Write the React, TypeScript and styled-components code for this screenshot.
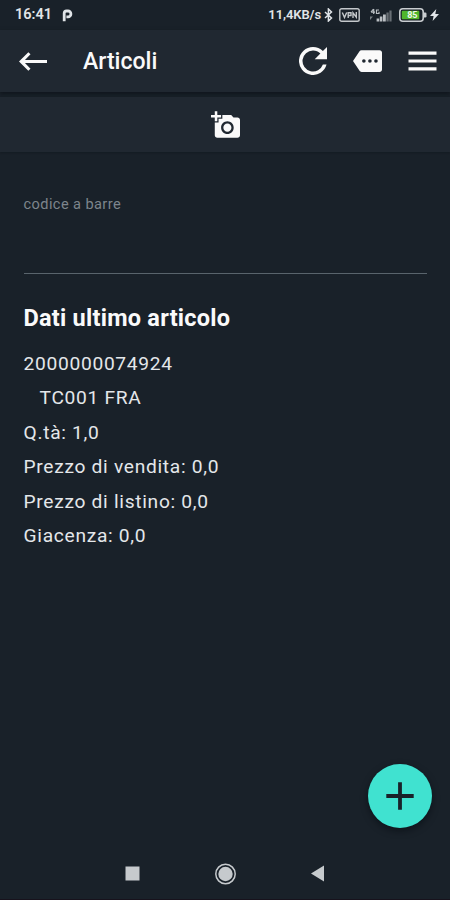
import React from "react";
import styled, { createGlobalStyle } from "styled-components";

const Global = createGlobalStyle`
  *, *::before, *::after { box-sizing: border-box; }
  body { margin: 0; background: #192129; font-family: Roboto, sans-serif; }
`;

const Screen = styled.main`
  width: 450px;
  height: 900px;
  display: flex;
  flex-direction: column;
  background: #192129;
  color: #e4e7ea;
  overflow: hidden;
  border-bottom: 1px solid #17121c;
`;

const StatusBar = styled.header`
  height: 30px;
  flex: none;
  display: flex;
  align-items: center;
  justify-content: space-between;
  padding: 0 11px 0 15px;
`;

const StatusGroup = styled.div`
  display: flex;
  align-items: center;
`;

const StatusText = styled.span<{ $size: number; $weight: number; $spacing?: number }>`
  font-size: ${(p) => p.$size}px;
  font-weight: ${(p) => p.$weight};
  line-height: 16px;
  letter-spacing: ${(p) => p.$spacing ?? 0}px;
  color: #e1e5e8;
`;

const Glyph = styled.svg<{ $left?: number }>`
  display: block;
  flex: none;
  margin-left: ${(p) => p.$left ?? 0}px;
`;

const AppBar = styled.nav`
  height: 62px;
  flex: none;
  display: flex;
  align-items: center;
  padding: 0 13px 0 19px;
  background: #202831;
  color: #fafafa;
  box-shadow: 0 2px 4px rgba(5, 10, 16, 0.5);
`;

const Title = styled.h1`
  flex: 1;
  margin: 2px 0 0 36px;
  font-size: 23px;
  font-weight: 500;
  line-height: 30px;
`;

const IconButton = styled.button`
  display: flex;
  padding: 0;
  border: 0;
  background: none;
  color: inherit;
`;

const Actions = styled.div`
  display: flex;
  align-items: center;
  gap: 26px;
  margin-top: -1px;
`;

const CameraBar = styled.div`
  height: 55px;
  flex: none;
  margin-top: 5px;
  display: flex;
  align-items: center;
  justify-content: center;
  background: #202831;
  color: #fafafa;
  box-shadow: 0 1px 2px rgba(5, 10, 16, 0.25);
`;

const Content = styled.section`
  flex: 1;
  padding: 42px 23px 0 23.5px;
`;

const Field = styled.div`
  height: 80px;
  border-bottom: 1px solid #59646c;
`;

const Label = styled.label`
  display: block;
  font-size: 14.6px;
  line-height: 20px;
  letter-spacing: 0.4px;
  color: #7d858c;
`;

const Heading = styled.h2`
  margin: 29px 0 14px;
  font-size: 23.5px;
  font-weight: 700;
  line-height: 30px;
  letter-spacing: 0.25px;
  color: #fafafa;
`;

const Line = styled.p<{ $indent?: boolean }>`
  margin: 0;
  padding-left: ${(p) => (p.$indent ? 16 : 0)}px;
  font-size: 19.2px;
  line-height: 34.4px;
  letter-spacing: 0.7px;
`;

const FabRow = styled.div`
  display: flex;
  justify-content: flex-end;
  padding-right: 18px;
  height: 64px;
  flex: none;
`;

const Fab = styled.button`
  width: 64px;
  height: 64px;
  padding: 0;
  border: 0;
  border-radius: 50%;
  display: flex;
  align-items: center;
  justify-content: center;
  background: #40e2d0;
  color: #192129;
  box-shadow: 0 3px 7px rgba(3, 8, 14, 0.5);
`;

const SystemNav = styled.footer`
  height: 71px;
  flex: none;
  display: grid;
  grid-template-columns: repeat(3, 93px);
  justify-content: center;
  justify-items: center;
  align-items: center;
  padding-top: 20px;
`;

export default function App() {
  return (
    <>
      <Global />
      <Screen>
        <StatusBar>
          <StatusGroup>
            <StatusText $size={14.5} $weight={600}>16:41</StatusText>
            <Glyph $left={10} width="11" height="13" viewBox="0 0 11 13" fill="none" stroke="#e1e5e8" strokeWidth="2.8">
              <path d="M2.2 12.2V4.2Q2.2 2 4.4 2H6a2.9 2.9 0 0 1 0 5.8H4.4" />
            </Glyph>
          </StatusGroup>
          <StatusGroup>
            <StatusText $size={13} $weight={600} $spacing={-0.1}>11,4KB/s</StatusText>
            <Glyph $left={3} width="9" height="14" viewBox="0 0 9 14" fill="none" stroke="#e1e5e8" strokeWidth="1.5">
              <path d="M1 4l6.5 6L4.4 13V1l3.1 3L1 10" />
            </Glyph>
            <Glyph $left={6} width="21" height="14" viewBox="0 0 21 14" fill="none" stroke="#c4c8cb">
              <rect x="0.8" y="0.8" width="19.4" height="12.4" rx="1.8" strokeWidth="1.4" />
              <path d="M3.3 4.5l2.2 5 2.2-5M9.2 10V4.8h2.8v2.7H9.2M14 10V4.8l3.3 4.4V4" strokeWidth="1.4" />
            </Glyph>
            <Glyph $left={9} width="24" height="15" viewBox="0 0 24 15" fill="#b9bec2">
              <path d="M4.7 1v5M2 4.2h4M4.5 1L2 4.2M10 2H7.5v3.5H10V3.8" fill="none" stroke="#b9bec2" strokeWidth="1.2" />
              <path d="M1 8.5h3L1 12z" opacity="0.6" />
              <path d="M7.6 10.5h2.6v3H7.6zM10.8 8.5h2.6v5h-2.6zM14 6.5h2.8v7H14z" />
              <path d="M17.4 4.5h2.3v9h-2.3zM20.4 2.5h2.2v11h-2.2z" opacity="0.5" />
            </Glyph>
            <Glyph $left={6} width="28" height="14" viewBox="0 0 28 14">
              <rect x="0.8" y="0.8" width="23.4" height="12.4" rx="3" fill="none" stroke="#c9cdd0" strokeWidth="1.6" />
              <path d="M25 4.5h1.2q1.3 0 1.3 1.3v2.4q0 1.3-1.3 1.3H25z" fill="#c9cdd0" />
              <rect x="2.8" y="2.8" width="17.5" height="8.4" rx="1" fill="#4fb62b" />
              <text x="8.2" y="10.3" fontFamily="Roboto, sans-serif" fontSize="9" fontWeight="700" fill="#edf6e9">85</text>
            </Glyph>
            <Glyph $left={3} width="9" height="12" viewBox="0 0 9 12" fill="#e1e5e8">
              <path d="M6.3 0L0 7h3.6L2.6 12 9 5H5.3z" />
            </Glyph>
          </StatusGroup>
        </StatusBar>

        <AppBar>
          <IconButton aria-label="Indietro">
            <Glyph width="28" height="19" viewBox="3 6 18 12" fill="currentColor">
              <path d="M21 11H6.83l3.58-3.59L9 6l-6 6 6 6 1.41-1.41L6.83 13H21z" />
            </Glyph>
          </IconButton>
          <Title>Articoli</Title>
          <Actions>
            <IconButton aria-label="Aggiorna">
              <Glyph width="28" height="28" viewBox="4 4 16 16" fill="currentColor">
                <path d="M17.65 6.35A7.96 7.96 0 0 0 12 4a8 8 0 1 0 7.73 10h-2.08A6 6 0 1 1 12 6c1.66 0 3.14.69 4.22 1.78L13 11h7V4z" />
              </Glyph>
            </IconButton>
            <IconButton aria-label="Etichette">
              <Glyph width="29" height="22" viewBox="0 3 24 18" fill="currentColor">
                <path d="M22 3H7c-.69 0-1.23.35-1.59.88L0 12l5.41 8.11c.36.53.97.89 1.66.89H22c1.1 0 2-.9 2-2V5c0-1.1-.9-2-2-2zM9 13.5a1.5 1.5 0 1 1 0-3 1.5 1.5 0 0 1 0 3zm5 0a1.5 1.5 0 1 1 0-3 1.5 1.5 0 0 1 0 3zm5 0a1.5 1.5 0 1 1 0-3 1.5 1.5 0 0 1 0 3z" />
              </Glyph>
            </IconButton>
            <IconButton aria-label="Menu">
              <Glyph width="29" height="20" viewBox="0 0 29 20" fill="currentColor">
                <path d="M.5 .5h28v3.2H.5zM.5 8.4h28v3.2H.5zM.5 16.2h28v3.2H.5z" />
              </Glyph>
            </IconButton>
          </Actions>
        </AppBar>

        <CameraBar>
          <IconButton aria-label="Scansiona">
            <Glyph width="29" height="27" viewBox="0 1 23 21" fill="currentColor">
              <path d="M3 4V1h2v3h3v2H5v3H3V6H0V4zm3 6V7h3V4h7l1.83 2H21c1.1 0 2 .9 2 2v12c0 1.1-.9 2-2 2H5c-1.1 0-2-.9-2-2V10zm7 9c2.76 0 5-2.24 5-5s-2.24-5-5-5-5 2.24-5 5 2.24 5 5 5zm-3.2-5c0 1.77 1.43 3.2 3.2 3.2s3.2-1.43 3.2-3.2-1.43-3.2-3.2-3.2-3.2 1.43-3.2 3.2z" />
            </Glyph>
          </IconButton>
        </CameraBar>

        <Content>
          <Field>
            <Label>codice a barre</Label>
          </Field>
          <Heading>Dati ultimo articolo</Heading>
          <Line>2000000074924</Line>
          <Line $indent>TC001 FRA</Line>
          <Line>Q.tà: 1,0</Line>
          <Line>Prezzo di vendita: 0,0</Line>
          <Line>Prezzo di listino: 0,0</Line>
          <Line>Giacenza: 0,0</Line>
        </Content>

        <FabRow>
          <Fab aria-label="Aggiungi">
            <Glyph width="28" height="28" viewBox="0 0 28 28" stroke="currentColor" strokeWidth="3.8">
              <path d="M14 .3v27.4M.3 14h27.4" />
            </Glyph>
          </Fab>
        </FabRow>

        <SystemNav>
          <Glyph width="15" height="15" viewBox="0 0 15 15">
            <rect x="0.5" y="0.5" width="14" height="14" fill="#c6cacd" />
          </Glyph>
          <Glyph width="22" height="22" viewBox="0 0 22 22">
            <circle cx="11.5" cy="11" r="9.7" fill="none" stroke="#c6cacd" strokeWidth="1.5" />
            <circle cx="11.5" cy="11" r="7.2" fill="#c6cacd" />
          </Glyph>
          <Glyph width="14" height="17" viewBox="0 0 14 17">
            <path d="M13 .5v16L0 8.5z" fill="#c6cacd" />
          </Glyph>
        </SystemNav>
      </Screen>
    </>
  );
}
